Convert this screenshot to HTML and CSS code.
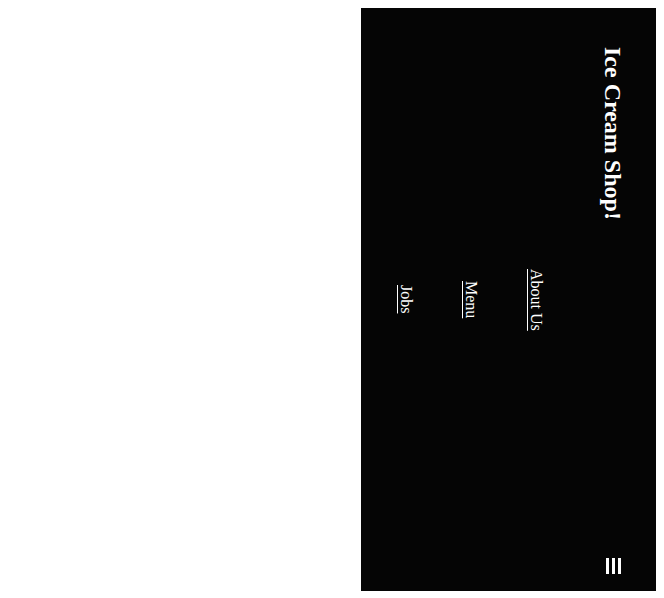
FILE: index.html
```html
<!DOCTYPE html>
<html lang="en">
<head>
    <meta charset="UTF-8">
    <meta name="viewport" content="width=device-width, initial-scale=1.0">
    <title>Ice Cream Shop!</title>
    <link rel="stylesheet" href="styles.css">
</head>
<body>
    <nav class="sidebar">
        <div class="header">
            <h2 class="title">Ice Cream Shop!</h2>
            <div class="burger">
                <span></span>
                <span></span>
                <span></span>
            </div>
        </div>
        <ul class="links">
            <li><a href="#">About Us</a></li>
            <li><a href="#">Menu</a></li>
            <li><a href="#">Jobs</a></li>
        </ul>
    </nav>
</body>
</html>
```

FILE: styles.css
```css
* {
    box-sizing: border-box;
    margin: 0;
    padding: 0;
}

body {
    margin: 8px;
    background-color: #fff;
    font-family: 'Liberation Serif', 'Times New Roman', serif;
}

.sidebar {
    writing-mode: vertical-rl;
    width: 295px;
    height: 583px;
    margin-left: auto;
    padding-right: 29px;
    background-color: #050505;
    color: #fff;
}

.header {
    display: flex;
    justify-content: space-between;
    align-items: center;
    padding-top: 39px;
    padding-bottom: 17px;
}

.title {
    font-size: 24px;
    font-weight: bold;
    line-height: 28px;
}

.burger {
    display: flex;
    flex-direction: column;
    gap: 3px;
}

.burger span {
    display: block;
    width: 3px;
    height: 16px;
    background-color: #fff;
}

.links {
    list-style: none;
    text-align: center;
    margin-right: 53px;
}

.links li {
    line-height: 20px;
    margin-left: 45px;
}

.links a {
    color: #fff;
    font-size: 16px;
}
```
